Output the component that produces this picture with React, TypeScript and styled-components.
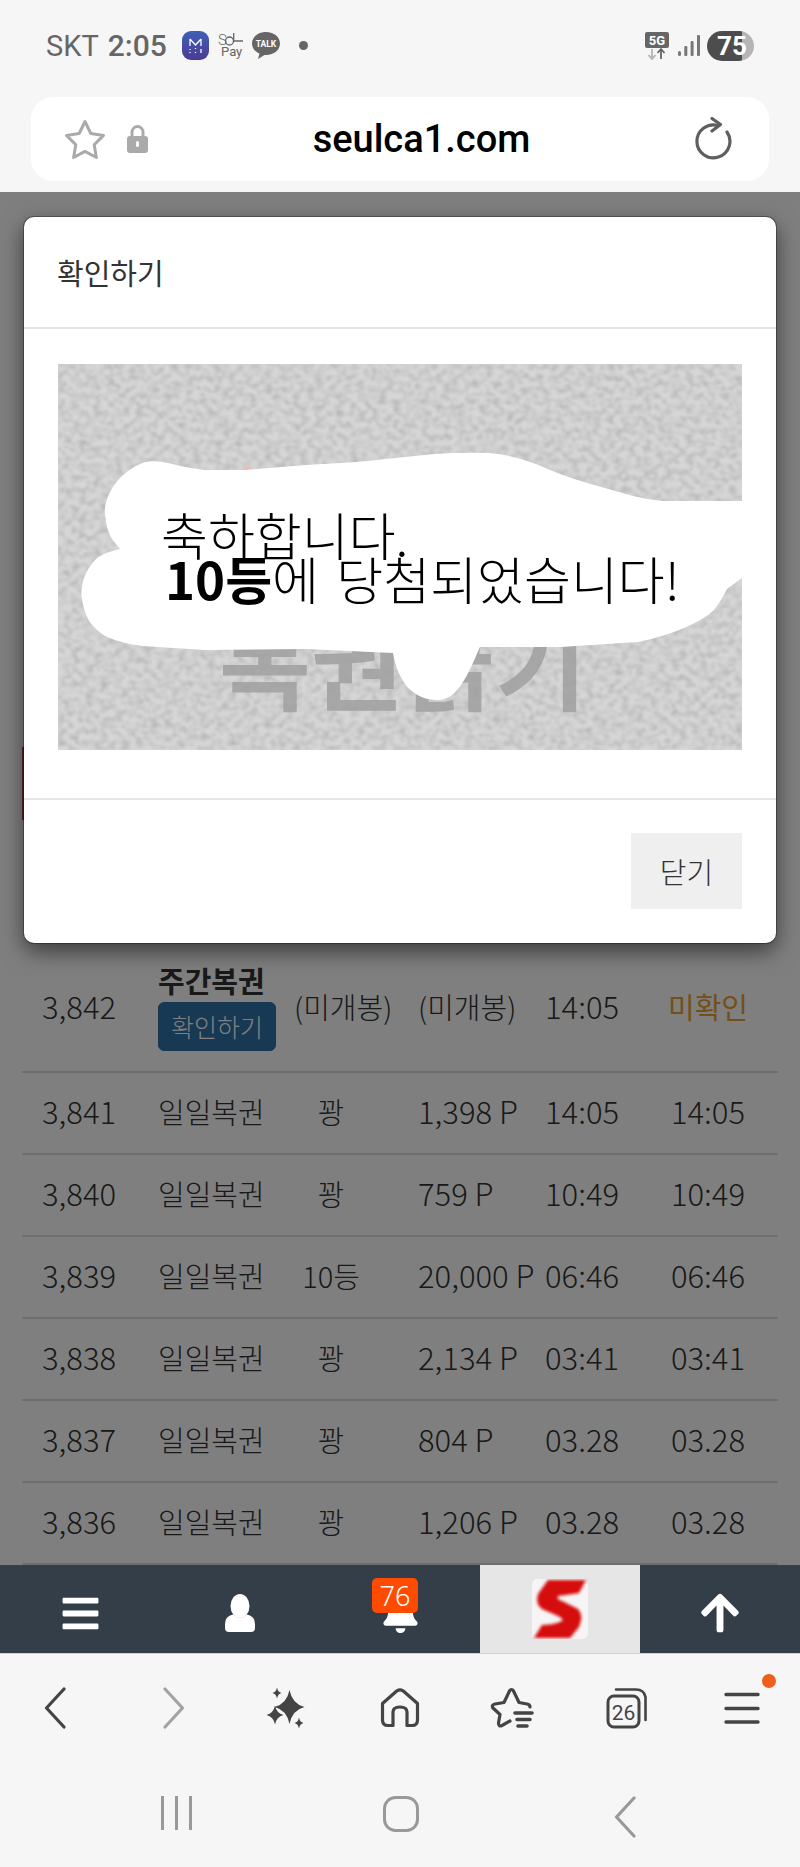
import React, {FC} from 'react';
import styled, {createGlobalStyle} from 'styled-components';
import {FaBars, FaBell, FaArrowUp} from 'react-icons/fa';

const KR = `"Noto Sans CJK KR", "Noto Sans", sans-serif`;

const GlobalStyle = createGlobalStyle`
    html, body {
        margin: 0;
        padding: 0;
        background: #f6f6f6;
    }
    * {
        box-sizing: border-box;
    }
`;

const Screen = styled.div`
    width: 800px;
    height: 1867px;
    display: flex;
    flex-direction: column;
    overflow: hidden;
    background: #f6f6f6;
    font-family: ${KR};
`;

// status bar
const StatusBar = styled.div`
    height: 97px;
    flex: none;
    display: flex;
    align-items: center;
    justify-content: space-between;
    padding: 0 46px 6px 46px;
    font-family: Roboto, sans-serif;
    color: #666;
`;

const StatusGroup = styled.div`
    display: flex;
    align-items: center;
`;

const Carrier = styled.span`
    font-size: 29px;
    margin-right: 9px;
`;

const Clock = styled.span`
    font-size: 30px;
    font-weight: 500;
    margin-right: 15px;
`;

const Battery = styled.div`
    width: 47px;
    height: 30px;
    margin-left: 7px;
    border-radius: 15px;
    display: flex;
    align-items: center;
    padding-left: 10px;
    background: linear-gradient(to right, #4d4d4d 0, #4d4d4d 35px, #b5b5b5 35px);
    color: #fff;
    font-size: 26px;
    font-weight: 700;
`;

// address bar
const AddressWrap = styled.div`
    height: 95px;
    flex: none;
    padding: 0 31px 11px;
`;

const AddressBar = styled.div`
    height: 84px;
    background: #fff;
    border-radius: 22px;
    display: flex;
    align-items: center;
    padding: 0 34px 0 33px;
    position: relative;
`;

const Host = styled.div`
    flex: 1;
    text-align: center;
    font-family: Roboto, sans-serif;
    font-weight: 500;
    font-size: 38px;
    color: #000;
`;

const LockWrap = styled.div`
    display: flex;
    margin-left: 21px;
`;

// page
const Page = styled.div`
    position: relative;
    height: 1373px;
    flex: none;
    background: #fff;
    display: flex;
    flex-direction: column;
    justify-content: flex-end;
    padding: 0 22px;
`;

const Notice = styled.div`
    height: 73px;
    margin-bottom: 125px;
    border-left: 3px solid #b5523f;
`;

const Row = styled.div<{$tall?: boolean}>`
    height: ${p => (p.$tall ? 128 : 82)}px;
    display: grid;
    grid-template-columns: 136px 116px 114px 157px 93px 140px;
    align-items: center;
    padding-bottom: 5px;
    border-bottom: 2px solid #ddd;
    font-size: 29px;
    font-weight: 300;
    color: #333;
    &:last-child {
        border-bottom: none;
    }
`;

const Cell = styled.div<{$center?: boolean; $pad?: number; $color?: string; $num?: boolean; $bold?: boolean}>`
    white-space: nowrap;
    text-align: ${p => (p.$center ? 'center' : 'left')};
    padding-left: ${p => p.$pad ?? 0}px;
    color: ${p => p.$color ?? 'inherit'};
    font-size: ${p => (p.$num ? 31 : 29)}px;
    font-weight: ${p => (p.$bold ? 400 : 300)};
`;

const TicketName = styled.div`
    font-weight: 700;
    line-height: 38px;
`;

const ConfirmTag = styled.div`
    width: 118px;
    height: 49px;
    margin-top: 3px;
    border-radius: 6px;
    background: #2f72a9;
    border: 1px solid #2e6da4;
    color: #fff;
    font-size: 25px;
    display: flex;
    align-items: center;
    justify-content: center;
`;

const Backdrop = styled.div`
    position: absolute;
    inset: 0;
    background: rgba(0, 0, 0, 0.5);
    padding: 25px 24px 0;
`;

const Modal = styled.div`
    height: 726px;
    background: #fff;
    border-radius: 10px;
    box-shadow: 0 0 0 1px rgba(0, 0, 0, 0.3), 0 8px 22px rgba(0, 0, 0, 0.55);
    display: flex;
    flex-direction: column;
`;

const ModalHeader = styled.div`
    height: 112px;
    flex: none;
    padding: 0 33px;
    display: flex;
    align-items: center;
    font-size: 29px;
    color: #333;
    border-bottom: 2px solid #e5e5e5;
`;

const ModalBody = styled.div`
    height: 471px;
    flex: none;
    padding: 35px 34px 0;
    border-bottom: 2px solid #e5e5e5;
`;

const Prize = styled.div`
    position: relative;
    width: 684px;
    height: 386px;
    overflow: hidden;
`;

const PrizeText = styled.div`
    position: absolute;
    left: 103px;
    top: 148px;
    font-size: 51px;
    line-height: 44px;
    color: #000;
    font-weight: 300;
    white-space: nowrap;
`;

const PrizeLine = styled.div<{$indent?: number}>`
    margin-left: ${p => p.$indent ?? 0}px;
    word-spacing: 6px;
`;

const PrizeRank = styled.span`
    font-weight: 700;
`;

const ModalFooter = styled.div`
    flex: 1;
    display: flex;
    justify-content: flex-end;
    padding: 33px 34px 0;
`;

const CloseButton = styled.button`
    width: 111px;
    height: 76px;
    border: none;
    background: #efefef;
    color: #333;
    font-family: ${KR};
    font-weight: 300;
    font-size: 29px;
`;

// dark bottom menu of the site
const SiteNav = styled.div`
    height: 88px;
    flex: none;
    display: grid;
    grid-template-columns: repeat(5, 160px);
    background: #333e48;
`;

const SiteNavItem = styled.div<{$light?: boolean}>`
    position: relative;
    display: flex;
    align-items: center;
    justify-content: center;
    padding-top: 8px;
    color: #fff;
    background: ${p => (p.$light ? '#e6e6e6' : 'transparent')};
`;

const Badge = styled.span`
    position: absolute;
    left: 52px;
    top: 13px;
    width: 46px;
    height: 35px;
    background: #ff4b00;
    border-radius: 5px;
    color: #fff;
    font-family: "Noto Sans", sans-serif;
    font-weight: 300;
    font-size: 27px;
    line-height: 35px;
    text-align: center;
`;

const LogoBox = styled.div`
    display: flex;
    margin-top: -8px;
`;

// browser toolbar
const BrowserBar = styled.div`
    height: 118px;
    flex: none;
    position: relative;
    display: grid;
    grid-template-columns: 110px 128px 94px 136px 88px 142px 88px;
    padding: 0 0 10px 0;
    align-items: center;
    justify-items: center;
    border-top: 1px solid #d0d0d0;
`;

const MenuDot = styled.span`
    position: absolute;
    left: 762px;
    top: 20px;
    width: 14px;
    height: 14px;
    border-radius: 50%;
    background: #ee5f1b;
`;

const SystemBar = styled.div`
    flex: 1;
    display: grid;
    grid-template-columns: 222px 231px auto;
    align-items: start;
    padding: 25px 0 0 161px;
`;

const star4 = (cx: number, cy: number, rx: number, ry: number) =>
    `M${cx} ${cy - ry}Q${cx + rx * 0.18} ${cy - ry * 0.18} ${cx + rx} ${cy}` +
    `Q${cx + rx * 0.18} ${cy + ry * 0.18} ${cx} ${cy + ry}` +
    `Q${cx - rx * 0.18} ${cy + ry * 0.18} ${cx - rx} ${cy}` +
    `Q${cx - rx * 0.18} ${cy - ry * 0.18} ${cx} ${cy - ry}Z`;

const BLOB =
    'M684 137L605 137Q590 136 575 132L529 119Q505 112 478 100Q455 91 432 89Q405 88 376 90L299 98L248 101L187 106L146 106Q128 104 110 99Q98 96 87 98Q78 101 70 107Q58 116 52 128Q46 140 47 150Q48 165 54 175L62 185Q48 188 39 194Q30 203 26 214Q22 225 24 235Q26 248 31 257Q38 267 49 273Q66 280 85 282L146 286L248 285L335 289C340 318 355 336 380 336C400 336 410 310 422 283L503 283L580 278Q605 273 626 264Q645 256 656 246Q664 236 669 225L684 214Z';

const PrizeArt: FC = () => (
    <svg width="684" height="386" viewBox="0 0 684 386">
        <filter id="grain" x="0" y="0" width="100%" height="100%">
            <feTurbulence type="fractalNoise" baseFrequency="0.14 0.17" numOctaves="3" seed="7" />
            <feColorMatrix values="0 0 0 0 0  0 0 0 0 0  0 0 0 0 0  1.6 0 0 0 -0.62" />
            <feGaussianBlur stdDeviation="0.9" />
        </filter>
        <rect width="684" height="386" fill="#d6d6d6" />
        <rect width="684" height="386" fill="#777" filter="url(#grain)" opacity="0.2" />
        <text x="161" y="339" fontFamily={KR} fontWeight="700" fontSize="100" fill="#a0a0a0" opacity="0.85">복권긁기</text>
        <ellipse cx="190" cy="105" rx="4" ry="2.500" fill="#f5b5b5" />
        <path d={BLOB} fill="#fff" />
    </svg>
);

const Chip: FC = () => (
    <svg width="27" height="29" viewBox="0 0 27 29" style={{marginRight: 9}}>
        <defs>
            <linearGradient id="chip" x1="0" y1="0" x2="0" y2="1">
                <stop offset="0" stopColor="#3f60b5" />
                <stop offset="1" stopColor="#4b3a95" />
            </linearGradient>
        </defs>
        <rect width="27" height="29" rx="9" fill="url(#chip)" />
        <path d="M8 8v7M19 8v7M8 8l5.500 6 5.500-6" fill="none" stroke="#fff" strokeWidth="1.300" />
        <path d="M8 18v1M8 21v1M13.500 17v1M13.500 21v1M19 18v4" stroke="#fff" strokeWidth="1.300" />
    </svg>
);

const SolPay: FC = () => (
    <svg width="26" height="29" viewBox="0 0 26 29" style={{marginRight: 8}}>
        <text x="0" y="14" fontFamily="Roboto, sans-serif" fontWeight="300" fontSize="15" fill="#666">S</text>
        <circle cx="11.500" cy="10" r="4" fill="none" stroke="#666" strokeWidth="1.300" />
        <path d="M15.700 2V10H25" fill="none" stroke="#666" strokeWidth="1.300" />
        <text x="3" y="25" fontFamily="Roboto, sans-serif" fontSize="13" fill="#666">Pay</text>
    </svg>
);

const TalkBubble: FC = () => (
    <svg width="28" height="27" viewBox="0 0 28 27" style={{marginRight: 19}}>
        <path d="M14 0C6 0 0 5 0 11.500C0 16 3 20 7.500 21.500L6 27L12.500 23Q13.300 23 14 23C22 23 28 18 28 11.500C28 5 22 0 14 0Z" fill="#666" />
        <text x="14" y="15" textAnchor="middle" fontFamily="Roboto, sans-serif" fontWeight="700" fontSize="8.500" fill="#fff">TALK</text>
    </svg>
);

const Dot: FC = () => (
    <svg width="9" height="9" viewBox="0 0 9 9">
        <circle cx="4.500" cy="4.500" r="4.500" fill="#666" />
    </svg>
);

const Network: FC = () => (
    <svg width="24" height="28" viewBox="0 0 24 28" style={{marginRight: 9}}>
        <rect width="24" height="16" rx="2" fill="#666" />
        <text x="12" y="13" textAnchor="middle" fontFamily="Roboto, sans-serif" fontWeight="700" fontSize="13" fill="#fff">5G</text>
        <path d="M7 17v9M3.500 23l3.500 4 3.500-4" fill="none" stroke="#b5b5b5" strokeWidth="1.800" />
        <path d="M16 27v-9M12.500 21l3.500-4 3.500 4" fill="none" stroke="#666" strokeWidth="1.800" />
    </svg>
);

const Signal: FC = () => (
    <svg width="22" height="21" viewBox="0 0 22 21">
        <g fill="#777">
            <rect x="0" y="16" width="3" height="5" rx="1.500" />
            <rect x="6.300" y="11" width="3" height="10" rx="1" />
            <rect x="12.600" y="6" width="3" height="15" rx="1" />
            <rect x="19" y="0" width="3" height="21" rx="1" />
        </g>
    </svg>
);

const FavStar: FC = () => (
    <svg width="42" height="41" viewBox="0 0 42 41">
        <path d="M21 2.500L26.800 14.500L39.500 16.400L30.200 25.700L32.400 38.500L21 32.400L9.600 38.500L11.800 25.700L2.500 16.400L15.200 14.500Z" fill="none" stroke="#aaa" strokeWidth="3" strokeLinejoin="round" />
    </svg>
);

const Lock: FC = () => (
    <svg width="21" height="28" viewBox="0 0 21 28">
        <path d="M5 13V7.500C5 4 7.500 1.500 10.500 1.500S16 4 16 7.500V13" fill="none" stroke="#aaa" strokeWidth="3" />
        <rect y="11" width="21" height="17" rx="3" fill="#aaa" />
        <rect x="9" y="16" width="3" height="6" rx="1.500" fill="#fff" />
    </svg>
);

const Reload: FC = () => (
    <svg width="40" height="44" viewBox="0 0 40 44">
        <path d="M32 15A16.500 16.500 0 1 1 23 8.500" fill="none" stroke="#5f5f5f" strokeWidth="3.200" strokeLinecap="round" />
        <path d="M17 1.500L25.500 7.500L17 14" fill="none" stroke="#5f5f5f" strokeWidth="3.200" strokeLinecap="round" strokeLinejoin="round" />
    </svg>
);

const UserIcon: FC = () => (
    <svg width="32" height="38" viewBox="0 0 32 38">
        <ellipse cx="16" cy="12" rx="9.500" ry="12" fill="#fff" />
        <path d="M1 30Q1 22 9 20.500Q16 27 23 20.500Q31 22 31 30V34Q31 38 27 38H5Q1 38 1 34Z" fill="#fff" />
    </svg>
);

const SLogo: FC = () => (
    <svg width="56" height="60" viewBox="0 0 56 60">
        <filter id="soft">
            <feGaussianBlur stdDeviation="1.800" />
        </filter>
        <rect width="56" height="60" rx="5" fill="#f6f4f4" />
        <path d="M16 1H54L47 14Q35 16 26 17Q24 20 30 22L46 30Q52 36 47 48L38 59H2L10 46Q22 46 30 42Q32 40 26 37L10 30Q3 25 6 15Z" fill="#d60d0d" filter="url(#soft)" />
    </svg>
);

const ChevronLeft: FC<{color?: string}> = ({color = '#444'}) => (
    <svg width="22" height="42" viewBox="0 0 22 42">
        <path d="M20 2L2.500 21L20 40" fill="none" stroke={color} strokeWidth="3.200" strokeLinecap="round" strokeLinejoin="round" />
    </svg>
);

const ChevronRight: FC = () => (
    <svg width="22" height="42" viewBox="0 0 22 42">
        <path d="M2 2L19.500 21L2 40" fill="none" stroke="#a3a3a3" strokeWidth="3.200" strokeLinecap="round" strokeLinejoin="round" />
    </svg>
);

const Sparkles: FC = () => (
    <svg width="40" height="42" viewBox="0 0 40 42">
        <g fill="#444">
            <path d={star4(24.5, 20, 15, 17)} />
            <path d={star4(10, 28, 8.5, 9.5)} />
            <path d={star4(12, 6, 4.5, 5.5)} />
            <path d={star4(34, 36, 4.5, 5.5)} />
        </g>
    </svg>
);

const HomeIcon: FC = () => (
    <svg width="40" height="40" viewBox="0 0 40 40">
        <path d="M2.500 15.500L17 2.800Q20 1 23 2.800L37.500 15.500V32Q37.500 37.500 32 37.500H27V24Q27 19 20 19Q13 19 13 24V37.500H8Q2.500 37.500 2.500 32Z" fill="none" stroke="#444" strokeWidth="3.200" strokeLinejoin="round" />
    </svg>
);

const StarList: FC = () => (
    <svg width="44" height="42" viewBox="0 0 44 42">
        <path d="M40 20Q40 17.500 37 17L29 15.500L23.500 4Q21.500 1 19.500 4L14 15.500L5 17Q1 18 3 21L10 27.500L8.500 36Q8.500 40 12 38.500L20 34" fill="none" stroke="#444" strokeWidth="3.200" strokeLinecap="round" strokeLinejoin="round" />
        <path d="M25 26H42M27 32.500H40M28 39H37" fill="none" stroke="#444" strokeWidth="3.600" strokeLinecap="round" />
    </svg>
);

const TabsIcon: FC = () => (
    <svg width="42" height="42" viewBox="0 0 42 42">
        <rect x="2" y="9" width="31" height="31" rx="6" fill="none" stroke="#444" strokeWidth="3" />
        <path d="M10 2.500H30Q38 2.500 39.500 10V33" fill="none" stroke="#444" strokeWidth="2.600" strokeLinecap="round" />
        <text x="17.500" y="33" textAnchor="middle" fontFamily="Roboto, sans-serif" fontSize="21" fill="#444">26</text>
    </svg>
);

const MenuIcon: FC = () => (
    <svg width="36" height="32" viewBox="0 0 36 32">
        <path d="M2 2.500H34M2 16.500H34M2 30H34" stroke="#444" strokeWidth="3.400" strokeLinecap="round" />
    </svg>
);

const SysLines: FC = () => (
    <svg width="31" height="34" viewBox="0 0 31 34">
        <path d="M1.500 0V34M15.500 0V34M29.500 0V34" stroke="#999" strokeWidth="3" />
    </svg>
);

const SysHome: FC = () => (
    <svg width="36" height="36" viewBox="0 0 36 36">
        <rect x="1.500" y="1.500" width="33" height="33" rx="11" fill="none" stroke="#999" strokeWidth="3" />
    </svg>
);

const rows = [
    {no: '3,841', name: '일일복권', prize: '꽝', point: '1,398 P', at: '14:05', used: '14:05'},
    {no: '3,840', name: '일일복권', prize: '꽝', point: '759 P', at: '10:49', used: '10:49'},
    {no: '3,839', name: '일일복권', prize: '10등', point: '20,000 P', at: '06:46', used: '06:46'},
    {no: '3,838', name: '일일복권', prize: '꽝', point: '2,134 P', at: '03:41', used: '03:41'},
    {no: '3,837', name: '일일복권', prize: '꽝', point: '804 P', at: '03.28', used: '03.28'},
    {no: '3,836', name: '일일복권', prize: '꽝', point: '1,206 P', at: '03.28', used: '03.28'},
];

const App: FC = () => {
    return (
        <Screen>
            <GlobalStyle />
            <StatusBar>
                <StatusGroup>
                    <Carrier>SKT</Carrier>
                    <Clock>2:05</Clock>
                    <Chip />
                    <SolPay />
                    <TalkBubble />
                    <Dot />
                </StatusGroup>
                <StatusGroup>
                    <Network />
                    <Signal />
                    <Battery>75</Battery>
                </StatusGroup>
            </StatusBar>

            <AddressWrap>
                <AddressBar>
                    <FavStar />
                    <LockWrap><Lock /></LockWrap>
                    <Host>seulca1.com</Host>
                    <Reload />
                </AddressBar>
            </AddressWrap>

            <Page>
                <Notice />
                <Row $tall>
                    <Cell $pad={20} $num>3,842</Cell>
                    <Cell>
                        <TicketName>주간복권</TicketName>
                        <ConfirmTag>확인하기</ConfirmTag>
                    </Cell>
                    <Cell $center $pad={20}>(미개봉)</Cell>
                    <Cell $pad={30}>(미개봉)</Cell>
                    <Cell $num>14:05</Cell>
                    <Cell $center $bold $color="#e89f32">미확인</Cell>
                </Row>
                {rows.map(r => (
                    <Row key={r.no}>
                        <Cell $pad={20} $num>{r.no}</Cell>
                        <Cell>{r.name}</Cell>
                        <Cell $center>{r.prize}</Cell>
                        <Cell $pad={30} $num>{r.point}</Cell>
                        <Cell $num>{r.at}</Cell>
                        <Cell $center $num>{r.used}</Cell>
                    </Row>
                ))}

                <Backdrop>
                    <Modal>
                        <ModalHeader>확인하기</ModalHeader>
                        <ModalBody>
                            <Prize>
                                <PrizeArt />
                                <PrizeText>
                                    <PrizeLine>축하합니다.</PrizeLine>
                                    <PrizeLine $indent={4}><PrizeRank>10등</PrizeRank>에 당첨되었습니다!</PrizeLine>
                                </PrizeText>
                            </Prize>
                        </ModalBody>
                        <ModalFooter>
                            <CloseButton>닫기</CloseButton>
                        </ModalFooter>
                    </Modal>
                </Backdrop>
            </Page>

            <SiteNav>
                <SiteNavItem><FaBars size={41} /></SiteNavItem>
                <SiteNavItem><UserIcon /></SiteNavItem>
                <SiteNavItem>
                    <FaBell size={39} />
                    <Badge>76</Badge>
                </SiteNavItem>
                <SiteNavItem $light><LogoBox><SLogo /></LogoBox></SiteNavItem>
                <SiteNavItem><FaArrowUp size={44} /></SiteNavItem>
            </SiteNav>

            <BrowserBar>
                <ChevronLeft />
                <ChevronRight />
                <Sparkles />
                <HomeIcon />
                <StarList />
                <TabsIcon />
                <MenuIcon />
                <MenuDot />
            </BrowserBar>

            <SystemBar>
                <SysLines />
                <SysHome />
                <ChevronLeft color="#999" />
            </SystemBar>
        </Screen>
    );
};

export default App;
